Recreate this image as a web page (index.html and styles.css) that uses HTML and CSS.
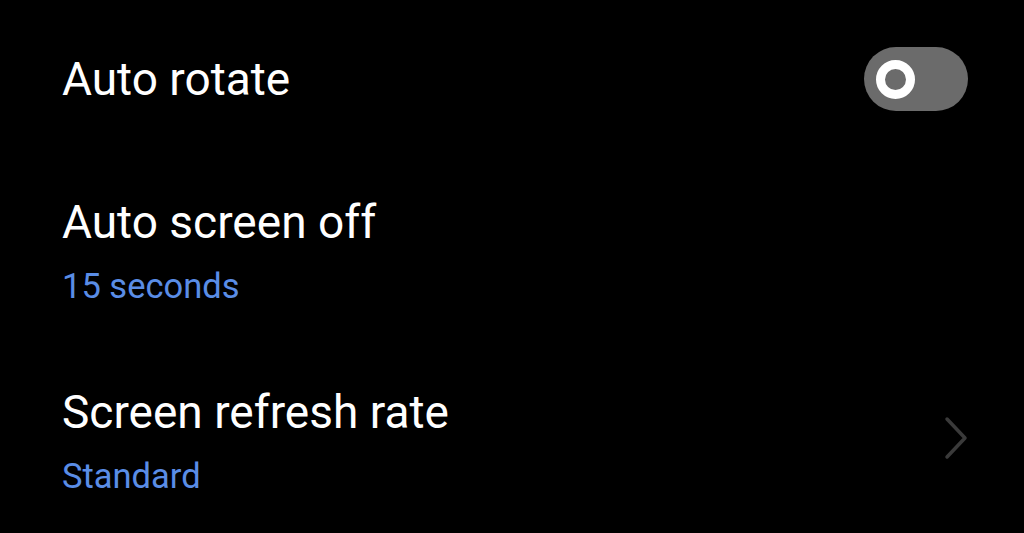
FILE: index.html
```html
<!DOCTYPE html>
<html lang="en">
<head>
  <meta charset="UTF-8" />
  <meta name="viewport" content="width=device-width, initial-scale=1.0"/>
  <title>Display settings</title>
  <link rel="stylesheet" href="styles.css">
</head>
<body>

  <div class="settings">
    <div class="row single">
      <div class="text">
        <div class="title">Auto rotate</div>
      </div>
      <div class="toggle"><span class="knob"></span></div>
    </div>

    <div class="row">
      <div class="text">
        <div class="title">Auto screen off</div>
        <div class="sub">15 seconds</div>
      </div>
    </div>

    <div class="row">
      <div class="text">
        <div class="title">Screen refresh rate</div>
        <div class="sub">Standard</div>
      </div>
      <svg class="chevron" width="24" height="44" viewBox="0 0 24 44">
        <path d="M3 3 L21 22 L3 41" fill="none" stroke="#3a3a3a" stroke-width="3.5" stroke-linecap="round" stroke-linejoin="round"/>
      </svg>
    </div>
  </div>

</body>
</html>
```

FILE: styles.css
```css
body {
  margin: 0;
  background: #000;
  color: #fff;
  font-family: Roboto, "Noto Sans", sans-serif;
  height: 533px;
  overflow: hidden;
}

.settings {
  padding-top: 9px;
}

.row {
  display: flex;
  align-items: center;
  justify-content: space-between;
  padding: 38px 56px 40px 62px;
}

.row.single {
  padding-bottom: 46px;
}

.title {
  font-size: 46px;
  line-height: 54px;
}

.sub {
  margin-top: 16px;
  font-size: 34.5px;
  line-height: 42px;
  color: #5a8de6;
}

.toggle {
  width: 104px;
  height: 64px;
  border-radius: 32px;
  background: #6b6b6b;
  display: flex;
  align-items: center;
  padding-left: 12px;
  box-sizing: border-box;
}

.knob {
  width: 39px;
  height: 39px;
  border-radius: 50%;
  border: 9px solid #fff;
  box-sizing: border-box;
}

.chevron {
  margin-bottom: 7px;
}
```
